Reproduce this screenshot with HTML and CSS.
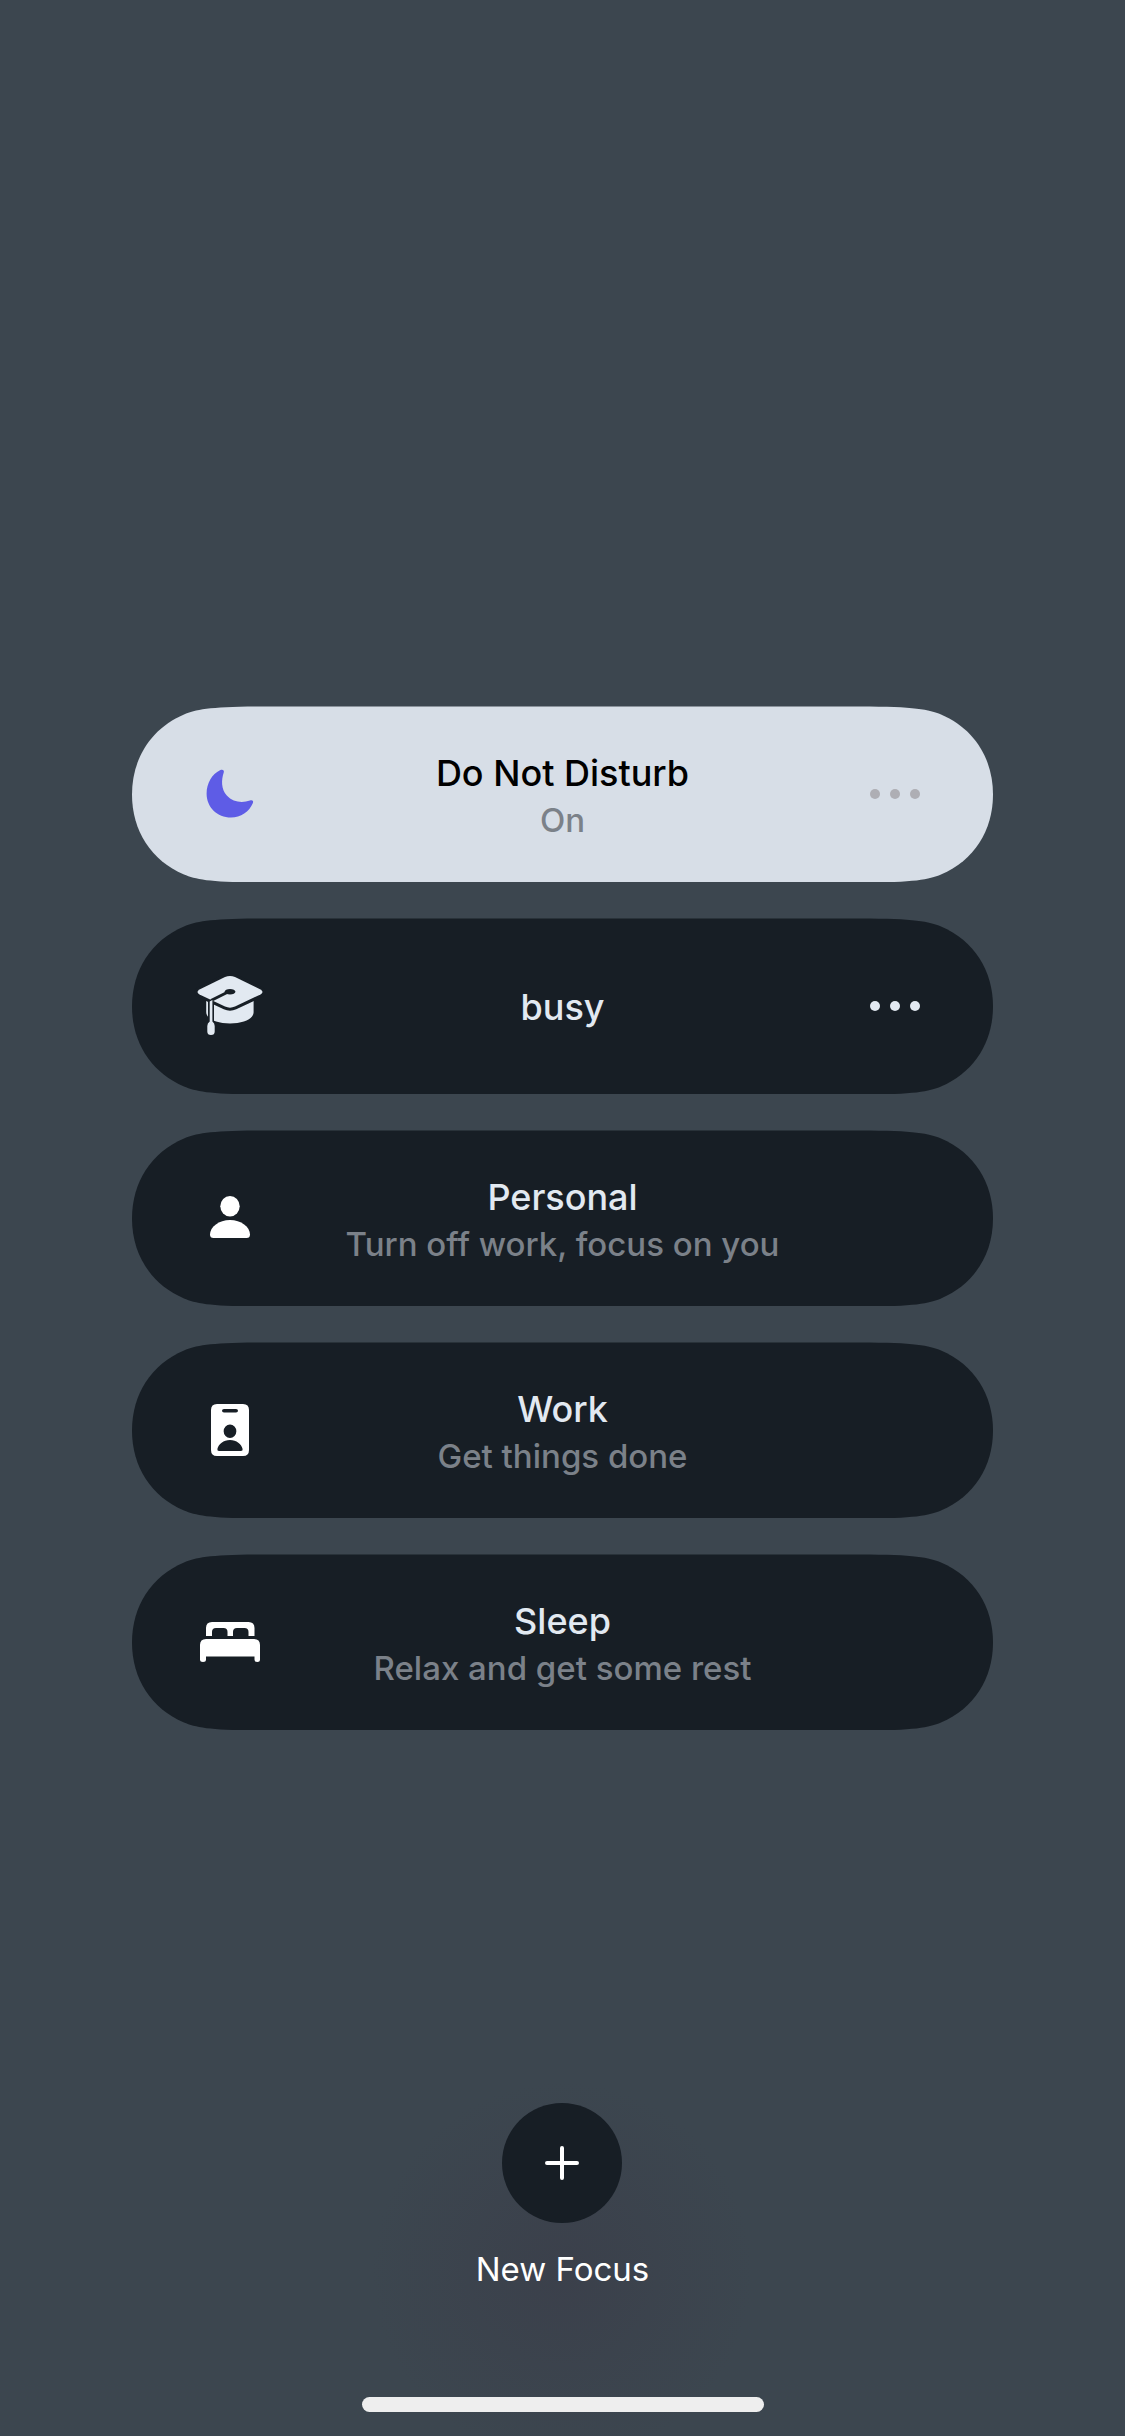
FILE: index.html
```html
<!DOCTYPE html>
<html lang="en">
<head>
<meta charset="utf-8">
<meta name="viewport" content="width=device-width, initial-scale=1">
<title>Focus</title>
<link rel="stylesheet" href="styles.css">
</head>
<body>
<main class="screen">
  <ul class="focus-list">
    <li class="card card-active">
      <button class="select" type="button" aria-pressed="true">
        <svg class="icon moon" viewBox="0 0 72 72" aria-hidden="true"><path d="M26 12.300C28.500 11.100 30.400 12.200 29.800 14.300C27.200 22 27 31 32.800 37.500C39 44.400 48.300 45 55.900 42.600C58.400 41.800 59.700 43 58.900 45C55.400 53.700 46.600 59.500 37 59.500C23.200 59.500 12.600 49 12.600 35.700C12.600 25.500 18 16 26 12.300Z"/></svg>
        <span class="label"><span class="name">Do Not Disturb</span><span class="note">On</span></span>
      </button>
      <button class="more" type="button" aria-label="Do Not Disturb options"><span class="dot"></span><span class="dot"></span><span class="dot"></span></button>
    </li>
    <li class="card">
      <button class="select" type="button" aria-pressed="false">
        <svg class="icon cap" viewBox="0 0 72 72" aria-hidden="true">
          <path d="M12.200 26H59.600V42C59.600 49 49 53.500 36 53.500C23 53.500 12.200 49 12.200 42Z"/>
          <path class="gap" d="M17 27V54"/>
          <path class="board" d="M5.500 19.500L31 7Q36 4.800 41 7L66.500 19.500Q70.500 22 66.500 24.500L41 36.500Q36 38.800 31 36.500L5.500 24.500Q1.500 22 5.500 19.500Z"/>
          <path class="groove" d="M35 21.500L17 30.500"/>
          <ellipse class="hole" cx="36" cy="21.700" rx="5.400" ry="2.800"/>
          <path d="M15.700 31.500L18.400 30V51.500Q20.700 53 20.700 56V61.500Q20.700 65 17 65Q13.300 65 13.300 61.500V56Q13.300 53 15.700 51.500Z"/>
        </svg>
        <span class="label"><span class="name">busy</span></span>
      </button>
      <button class="more" type="button" aria-label="busy options"><span class="dot"></span><span class="dot"></span><span class="dot"></span></button>
    </li>
    <li class="card">
      <button class="select" type="button" aria-pressed="false">
        <svg class="icon" viewBox="0 0 72 72" aria-hidden="true"><ellipse cx="36" cy="24.200" rx="9.700" ry="10.300"/><path d="M16 52.500C16 45 25 38 36 38S56 45 56 52.500Q56 56 52.500 56H19.500Q16 56 16 52.500Z"/></svg>
        <span class="label"><span class="name">Personal</span><span class="note">Turn off work, focus on you</span></span>
      </button>
    </li>
    <li class="card">
      <button class="select" type="button" aria-pressed="false">
        <svg class="icon" viewBox="0 0 72 72" aria-hidden="true"><path fill-rule="evenodd" d="M23 10H49Q55 10 55 16V56Q55 62 49 62H23Q17 62 17 56V16Q17 10 23 10ZM30 15Q28 15 28 16.700Q28 18.500 30 18.500H42Q44 18.500 44 16.700Q44 15 42 15ZM36 30.500A6.300 6.700 0 1 0 36 44A6.300 6.700 0 1 0 36 30.500ZM25 57H47Q49 57 48.600 55C47.500 50 42.500 46 36 46S24.500 50 23.400 55Q23 57 25 57Z"/></svg>
        <span class="label"><span class="name">Work</span><span class="note">Get things done</span></span>
      </button>
    </li>
    <li class="card">
      <button class="select" type="button" aria-pressed="false">
        <svg class="icon" viewBox="0 0 72 72" aria-hidden="true"><path d="M12 30V22Q12 16 18 16H54.500Q60.500 16 60.500 22V30H54.500V26Q54.500 22 50.500 22H43Q39 22 39 26V30H33.500V26Q33.500 22 29.500 22H22Q18 22 18 26V30Z"/><path d="M12 33H60Q66 33 66 39V53.500Q66 56 63.300 56Q60.500 56 60.500 53.500V50.500H12V53.500Q12 56 9 56Q6 56 6 53.500V39Q6 33 12 33Z"/></svg>
        <span class="label"><span class="name">Sleep</span><span class="note">Relax and get some rest</span></span>
      </button>
    </li>
  </ul>
  <footer class="footer">
    <button class="new-focus" type="button">
      <span class="plus"><svg class="plus-icon" viewBox="0 0 34 34" aria-hidden="true"><path d="M17 2V32M2 17H32"/></svg></span>
      <span class="new-label">New Focus</span>
    </button>
    <div class="home-bar"></div>
  </footer>
</main>
</body>
</html>
```
FILE: styles.css
```css
* { box-sizing: border-box; }

body {
  margin: 0;
  background: #3c464f;
  font-family: Inter, "Liberation Sans", sans-serif;
  color: #e2e9f1;
}

button {
  margin: 0;
  padding: 0;
  border: 0;
  background: none;
  font: inherit;
  color: inherit;
  cursor: pointer;
}

.screen {
  min-height: 100vh;
  display: flex;
  flex-direction: column;
  padding-top: 29vh;
}

.focus-list {
  list-style: none;
  margin: 0;
  padding: 0 132px;
  display: flex;
  flex-direction: column;
  gap: 36px;
}

.card {
  display: grid;
  grid-template-columns: 1fr 196px;
  height: 176px;
  background: #171e25;
  border-radius: 88px;
}

/* Continuous-curvature ends where the browser can draw them */
@supports (clip-path: shape(from 0px 0px, line to 1px 1px)) {
  .card {
    border-radius: 0;
    clip-path: shape(from 0px 88px,
      curve to 52px 8px with 0px 52px / 19px 22px,
      curve to 133px 0px with 64px 3px / 78px 0px,
      hline to calc(100% - 133px),
      curve to calc(100% - 52px) 8px with calc(100% - 78px) 0px / calc(100% - 64px) 3px,
      curve to 100% 88px with calc(100% - 19px) 22px / 100% 52px,
      curve to calc(100% - 52px) 168px with 100% 124px / calc(100% - 19px) 154px,
      curve to calc(100% - 133px) 176px with calc(100% - 64px) 173px / calc(100% - 78px) 176px,
      hline to 133px,
      curve to 52px 168px with 78px 176px / 64px 173px,
      curve to 0px 88px with 19px 154px / 0px 124px,
      close);
  }
}

.card-active {
  background: #d7dee7;
  color: #000;
}

.select {
  display: grid;
  grid-template-columns: 196px 1fr;
  align-items: center;
}

.icon {
  width: 72px;
  height: 72px;
  justify-self: center;
  fill: #fff;
}

.moon { fill: #5e5ce6; }

.cap { fill: #e2e9f1; }
.cap .hole { fill: #171e25; }
.cap .gap { fill: none; stroke: #171e25; stroke-width: 6; }
.cap .board { stroke: #171e25; stroke-width: 6; paint-order: stroke; }
.cap .groove { fill: none; stroke: #171e25; stroke-width: 3; }

.label {
  display: flex;
  flex-direction: column;
  padding-top: 6px;
  text-align: center;
  white-space: nowrap;
}

.name {
  font-size: 36px;
  line-height: 47px;
  font-weight: 500;
}

.name:only-child { padding-bottom: 4px; }

.note {
  font-size: 33px;
  line-height: 47px;
  font-weight: 500;
  color: #7b8189;
}

.more {
  display: flex;
  align-items: center;
  justify-content: center;
  gap: 10px;
}

.dot {
  width: 10px;
  height: 10px;
  border-radius: 50%;
  background: #e2e9f1;
}

.card-active .dot { background: #aeaeb4; }

.footer {
  margin-top: auto;
  padding: 40px 0 24px;
  display: flex;
  flex-direction: column;
  align-items: center;
  gap: 108px;
  background: radial-gradient(circle 190px at 50% 56%, #3b404b, #3c464f00);
}

.new-focus {
  display: flex;
  flex-direction: column;
  align-items: center;
  gap: 26px;
}

.plus {
  display: grid;
  place-items: center;
  width: 120px;
  height: 120px;
  border-radius: 50%;
  background: #171e25;
}

.plus-icon {
  width: 34px;
  height: 34px;
  fill: none;
  stroke: #fff;
  stroke-width: 4;
  stroke-linecap: round;
}

.new-label {
  font-size: 33px;
  line-height: 40px;
  color: #fff;
}

.home-bar {
  width: 402px;
  height: 15px;
  border-radius: 8px;
  background: #eee;
}
```
